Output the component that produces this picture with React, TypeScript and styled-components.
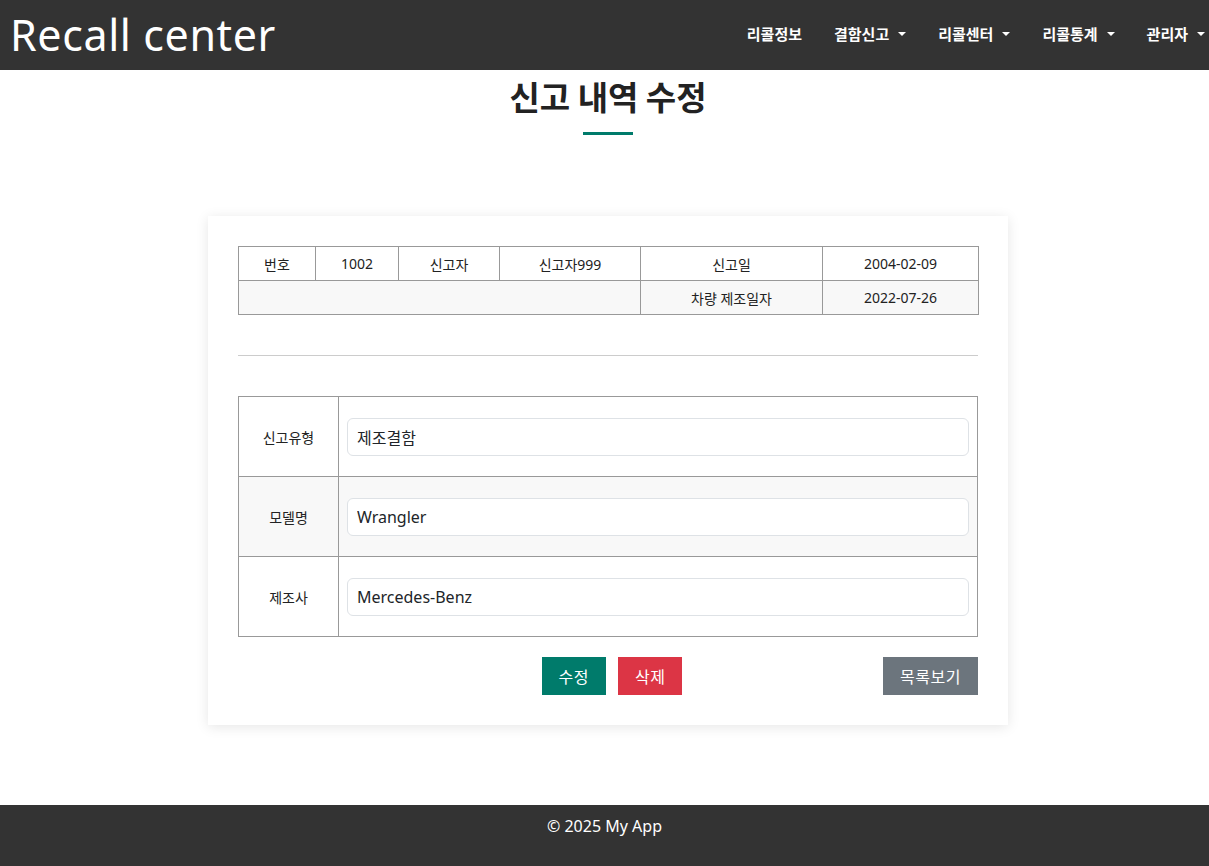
import styled, { createGlobalStyle } from 'styled-components';

const GlobalStyle = createGlobalStyle`
  * { box-sizing: border-box; }
  html, body { margin: 0; padding: 0; background: #fff; }
  body {
    font-family: "Noto Sans", "Noto Sans CJK KR", sans-serif;
    color: #212529;
  }
`;

const Color = {
  DARK: '#333333',
  TEAL: '#007b6b',
  RED: '#dc3545',
  GRAY: '#6c757d',
  LINE: '#999999',
  STRIPE: '#f8f8f8',
};

const Page = styled.div`
  display: flex;
  flex-direction: column;
  min-height: 866px;
`;

const Header = styled.header`
  display: flex;
  align-items: center;
  justify-content: space-between;
  height: 70px;
  padding: 0 4px 0 10px;
  background: ${Color.DARK};
`;

const Brand = styled.div`
  color: #fff;
  font-family: "Noto Sans", "Open Sans", sans-serif;
  font-size: 43px;
  font-weight: 400;
  letter-spacing: 0.6px;
  line-height: 1;
  margin-top: -2px;
`;

const Nav = styled.nav`
  display: flex;
  align-items: center;
  gap: 32px;
`;

const NavItem = styled.span`
  display: flex;
  align-items: center;
  gap: 9px;
  color: #fff;
  font-size: 15px;
  font-weight: 700;
  font-family: "Noto Sans CJK KR", sans-serif;
  margin-top: -4px;
`;

const Caret = styled.span`
  width: 0;
  height: 0;
  border-left: 4px solid transparent;
  border-right: 4px solid transparent;
  border-top: 4px solid #fff;
  margin-top: 2px;
`;

const Main = styled.main`
  flex: 1;
  display: flex;
  flex-direction: column;
  align-items: center;
  padding: 0 0 80px 7px;
`;

const Title = styled.h1`
  margin: 3px 0 0;
  font-family: "Noto Sans CJK KR", sans-serif;
  font-size: 33px;
  font-weight: 700;
  color: #222;
  line-height: 46px;
`;

const TitleBar = styled.div`
  width: 50px;
  height: 3px;
  margin-top: 13px;
  background: ${Color.TEAL};
`;

const Card = styled.section`
  width: 800px;
  margin-top: 81px;
  padding: 30px;
  background: #fff;
  box-shadow: 0 2px 12px rgba(0, 0, 0, 0.1);
`;

const Table = styled.table`
  width: 100%;
  border-collapse: collapse;
  table-layout: fixed;
  font-size: 14px;
  font-family: "Noto Sans", "Noto Sans CJK KR", sans-serif;
`;

const Row = styled.tr<{ $striped?: boolean }>`
  background: ${({ $striped }) => ($striped ? Color.STRIPE : '#fff')};
`;

const Cell = styled.td<{ $height: number }>`
  height: ${({ $height }) => $height}px;
  border: 1px solid ${Color.LINE};
  text-align: center;
  vertical-align: middle;
  padding: 0 8px;
  color: #222;
`;

const InputCell = styled.td`
  border: 1px solid ${Color.LINE};
  padding: 0 8px;
  vertical-align: middle;
`;

const Divider = styled.hr`
  margin: 40px 0;
  border: 0;
  border-top: 1px solid #ccc;
`;

const Input = styled.input`
  display: block;
  width: 100%;
  height: 38px;
  padding: 0 9px;
  border: 1px solid #dee2e6;
  border-radius: 6px;
  background: #fff;
  font-family: "Noto Sans", "Noto Sans CJK KR", sans-serif;
  font-size: 16px;
  color: #212529;
  outline: none;
`;

const Actions = styled.div`
  display: grid;
  grid-template-columns: 1fr auto 1fr;
  align-items: center;
  margin-top: 20px;
`;

const Center = styled.div`
  display: flex;
  gap: 12px;
  margin-left: 8px;
`;

const Right = styled.div`
  display: flex;
  justify-content: flex-end;
`;

const Button = styled.button<{ $bg: string }>`
  height: 38px;
  padding: 0 17px;
  border: 0;
  background: ${({ $bg }) => $bg};
  color: #fff;
  font-family: "Noto Sans CJK KR", sans-serif;
  font-size: 16px;
  letter-spacing: 0.5px;
`;

const Footer = styled.footer`
  height: 61px;
  background: ${Color.DARK};
  color: #fff;
  text-align: center;
  font-size: 16px;
  padding-top: 10px;
`;

const fields = [
  { label: '신고유형', value: '제조결함' },
  { label: '모델명', value: 'Wrangler' },
  { label: '제조사', value: 'Mercedes-Benz' },
];

const App = () => (
  <Page>
    <GlobalStyle />
    <Header>
      <Brand>Recall center</Brand>
      <Nav>
        <NavItem>리콜정보</NavItem>
        <NavItem>
          결함신고 <Caret />
        </NavItem>
        <NavItem>
          리콜센터 <Caret />
        </NavItem>
        <NavItem>
          리콜통계 <Caret />
        </NavItem>
        <NavItem>
          관리자 <Caret />
        </NavItem>
      </Nav>
    </Header>
    <Main>
      <Title>신고 내역 수정</Title>
      <TitleBar />
      <Card>
        <Table>
          <colgroup>
            <col style={{ width: 77 }} />
            <col style={{ width: 83 }} />
            <col style={{ width: 101 }} />
            <col style={{ width: 141 }} />
            <col style={{ width: 182 }} />
            <col style={{ width: 156 }} />
          </colgroup>
          <tbody>
            <Row>
              <Cell $height={34}>번호</Cell>
              <Cell $height={34}>1002</Cell>
              <Cell $height={34}>신고자</Cell>
              <Cell $height={34}>신고자999</Cell>
              <Cell $height={34}>신고일</Cell>
              <Cell $height={34}>2004-02-09</Cell>
            </Row>
            <Row $striped>
              <Cell $height={34} colSpan={4} />
              <Cell $height={34}>차량 제조일자</Cell>
              <Cell $height={34}>2022-07-26</Cell>
            </Row>
          </tbody>
        </Table>
        <Divider />
        <Table>
          <colgroup>
            <col style={{ width: 100 }} />
            <col />
          </colgroup>
          <tbody>
            {fields.map((f, i) => (
              <Row key={f.label} $striped={i % 2 === 1}>
                <Cell $height={80}>{f.label}</Cell>
                <InputCell>
                  <Input defaultValue={f.value} />
                </InputCell>
              </Row>
            ))}
          </tbody>
        </Table>
        <Actions>
          <div />
          <Center>
            <Button $bg={Color.TEAL}>수정</Button>
            <Button $bg={Color.RED}>삭제</Button>
          </Center>
          <Right>
            <Button $bg={Color.GRAY}>목록보기</Button>
          </Right>
        </Actions>
      </Card>
    </Main>
    <Footer>© 2025 My App</Footer>
  </Page>
);

export default App;
